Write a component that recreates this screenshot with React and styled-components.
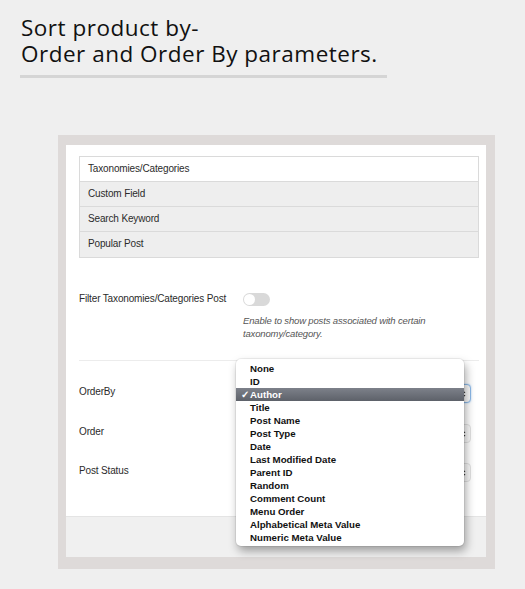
import React from 'react'
import styled, { createGlobalStyle } from 'styled-components'

const GlobalStyle = createGlobalStyle`
  body {
    margin: 0;
    background: #efefef;
  }
`

const Page = styled.div`
  width: 525px;
  height: 589px;
  background: #efefef;
  overflow: hidden;
  font-family: 'Liberation Sans', Arial, sans-serif;
`

const Heading = styled.h1`
  margin: 15px 0 0 20px;
  width: 366px;
  padding: 0 0 8px 1px;
  border-bottom: 3px solid #d5d5d5;
  font-family: 'Open Sans', 'Noto Sans', sans-serif;
  font-weight: 400;
  font-size: 22.5px;
  line-height: 26px;
  letter-spacing: 0.5px;
  color: #111;
`

const Frame = styled.div`
  margin: 57px 0 0 58px;
  width: 437px;
  box-sizing: border-box;
  padding: 10px 9px 12px 8px;
  background: #dedad9;
`

const Panel = styled.div`
  background: #fff;
  padding: 11px 7px 34px 13px;
  font-size: 10px;
  letter-spacing: -0.15px;
  color: #2b2b2b;
`

const Footer = styled.div`
  height: 40px;
  background: #f0f0f0;
  border-top: 1px solid #e4e4e4;
`

const Tabs = styled.ul`
  margin: 0;
  padding: 0;
  list-style: none;
  border: 1px solid #dadada;
`

const Tab = styled.li`
  height: 24px;
  line-height: 24px;
  padding-left: 8px;
  background: ${(p) => (p.active ? '#fff' : '#eeeeee')};
  border-bottom: 1px solid #dadada;
  &:last-child {
    border-bottom: 0;
    height: 25px;
  }
`

const FieldRow = styled.div`
  display: flex;
  align-items: flex-start;
  margin-top: ${(p) => p.gap || 0}px;
  position: relative;
`

const Label = styled.div`
  width: 164px;
  flex: none;
  line-height: 13px;
  padding-top: ${(p) => p.offset || 0}px;
`

const Control = styled.div`
  display: flex;
  flex-direction: column;
`

const Toggle = styled.div`
  position: relative;
  width: 27px;
  height: 13px;
  margin-top: 1px;
  border-radius: 7px;
  background: #d9d9d9;

  &::after {
    content: '';
    position: absolute;
    left: 1px;
    top: 1px;
    width: 11px;
    height: 11px;
    border-radius: 50%;
    background: #fff;
  }
`

const Help = styled.p`
  margin: 8px 0 0;
  max-width: 200px;
  font-size: 9.5px;
  line-height: 13px;
  font-style: italic;
  color: #555;
`

const Divider = styled.hr`
  margin: 20px 0 23px;
  border: 0;
  border-top: 1px solid #ececec;
`

const Select = styled.div`
  position: relative;
  width: 228px;
  height: 19px;
  box-sizing: border-box;
  border: 1px solid ${(p) => (p.focused ? '#8cb9e8' : '#e2e2e2')};
  box-shadow: ${(p) => (p.focused ? '0 0 2px #a9cdf2' : 'none')};
  border-radius: 4px;
  background: #fafafa;

  svg {
    position: absolute;
    right: 4px;
    top: 4px;
  }
`

const Menu = styled.ul`
  position: absolute;
  left: 157px;
  top: -25px;
  width: 228px;
  margin: 0;
  padding: 3px 0 2px;
  list-style: none;
  background: #fff;
  border-radius: 5px;
  box-shadow: 0 0 0 1px rgba(0, 0, 0, 0.06), 2px 5px 10px rgba(0, 0, 0, 0.35);
  z-index: 2;
`

const MenuItem = styled.li`
  position: relative;
  height: 13px;
  line-height: 13px;
  padding-left: 14px;
  font-size: 9.7px;
  font-weight: 700;
  letter-spacing: 0;
  color: ${(p) => (p.selected ? '#fff' : '#111')};
  background: ${(p) => (p.selected ? 'linear-gradient(#7d818a, #5d6169)' : 'transparent')};
`

const Check = styled.span`
  position: absolute;
  left: 5px;
  top: 0;
`

const Arrows = () => (
  <svg width="6" height="10" viewBox="0 0 6 10">
    <path d="M3 1 L5.5 4 H0.5 Z M3 9 L5.5 6 H0.5 Z" fill="#333" />
  </svg>
)

const orderOptions = [
  'None',
  'ID',
  'Author',
  'Title',
  'Post Name',
  'Post Type',
  'Date',
  'Last Modified Date',
  'Parent ID',
  'Random',
  'Comment Count',
  'Menu Order',
  'Alphabetical Meta Value',
  'Numeric Meta Value',
]

const tabs = ['Taxonomies/Categories', 'Custom Field', 'Search Keyword', 'Popular Post']

export default function App() {
  return (
    <Page>
      <GlobalStyle />
      <Heading>
        Sort product by-
        <br />
        Order and Order By parameters.
      </Heading>
      <Frame>
        <Panel>
          <Tabs>
            {tabs.map((t, i) => (
              <Tab key={t} active={i === 0}>
                {t}
              </Tab>
            ))}
          </Tabs>

          <FieldRow gap={34}>
            <Label>Filter Taxonomies/Categories Post</Label>
            <Control>
              <Toggle />
              <Help>Enable to show posts associated with certain taxonomy/category.</Help>
            </Control>
          </FieldRow>

          <Divider />

          <FieldRow>
            <Label offset={1}>OrderBy</Label>
            <Select focused>
              <Arrows />
            </Select>
            <Menu>
              {orderOptions.map((o) => (
                <MenuItem key={o} selected={o === 'Author'}>
                  {o === 'Author' && <Check>✓</Check>}
                  {o}
                </MenuItem>
              ))}
            </Menu>
          </FieldRow>
          <FieldRow gap={21}>
            <Label offset={1}>Order</Label>
            <Select>
              <Arrows />
            </Select>
          </FieldRow>
          <FieldRow gap={20}>
            <Label offset={1}>Post Status</Label>
            <Select>
              <Arrows />
            </Select>
          </FieldRow>
        </Panel>
        <Footer />
      </Frame>
    </Page>
  )
}
